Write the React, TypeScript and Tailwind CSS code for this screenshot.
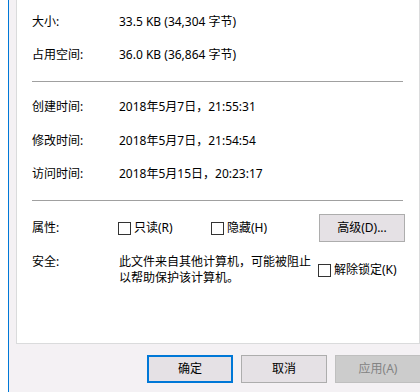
import React from "react";

const font = { fontFamily: '"Noto Sans", "Noto Sans CJK SC", sans-serif' };

function Row({ label, value, className = "" }: { label: string; value: string; className?: string }) {
  return (
    <div className={"flex h-[16px] items-center " + className}>
      <div className="w-[87px] shrink-0">{label}</div>
      <div>{value}</div>
    </div>
  );
}

function Check({ label }: { label: string }) {
  return (
    <div className="flex items-center">
      <span className="block h-[13px] w-[13px] border border-[#333333] bg-white" />
      <span className="ml-[3px]">{label}</span>
    </div>
  );
}

export default function App() {
  return (
    <div
      className="flex h-[392px] w-[420px] overflow-hidden bg-white text-[12px] leading-[16px] text-black"
      style={font}
    >
      <div className="w-[8px] shrink-0 bg-white" />
      <div className="w-[1px] shrink-0 bg-[#0078d7]" />
      <div className="flex min-w-0 flex-1 flex-col bg-[#f4f1f4] pl-[7px]">
        <div className="h-[344px] shrink-0 border-b border-l border-r border-[#dadbdc] bg-white pl-[15px] pr-[16px]">
          <Row label="大小:" value="33.5 KB (34,304 字节)" className="mt-[14px]" />
          <Row label="占用空间:" value="36.0 KB (36,864 字节)" className="mt-[17px]" />
          <div className="mt-[18px] h-[1px] bg-[#a0a0a0]" />
          <Row label="创建时间:" value="2018年5月7日，21:55:31" className="mt-[17px]" />
          <Row label="修改时间:" value="2018年5月7日，21:54:54" className="mt-[18px]" />
          <Row label="访问时间:" value="2018年5月15日，20:23:17" className="mt-[17px]" />
          <div className="mt-[18px] h-[1px] bg-[#a0a0a0]" />
          <div className="mt-[13px] flex h-[28px] items-center">
            <div className="w-[86px] shrink-0">属性:</div>
            <div className="w-[93px] shrink-0">
              <Check label="只读(R)" />
            </div>
            <div className="w-[108px] shrink-0">
              <Check label="隐藏(H)" />
            </div>
            <div className="flex h-[28px] w-[86px] shrink-0 items-center justify-center border border-[#adadad] bg-[#e5e1e5]">
              高级(D)...
            </div>
          </div>
          <div className="mt-[12px] flex items-start">
            <div className="w-[87px] shrink-0">安全:</div>
            <div className="w-[199px] shrink-0">
              此文件来自其他计算机，可能被阻止
              <br />
              以帮助保护该计算机。
            </div>
            <div className="mt-[8px]">
              <Check label="解除锁定(K)" />
            </div>
          </div>
        </div>
        <div className="mt-[11px] flex gap-[8px] pl-[131px]">
          <div className="flex h-[28px] w-[86px] shrink-0 items-center justify-center border-2 border-[#0078d7] bg-[#e5e1e5]">
            确定
          </div>
          <div className="flex h-[28px] w-[86px] shrink-0 items-center justify-center border border-[#adadad] bg-[#e5e1e5]">
            取消
          </div>
          <div className="flex h-[28px] w-[86px] shrink-0 items-center justify-center border border-[#bfbfbf] bg-[#cccccc] text-[#838383]">
            应用(A)
          </div>
        </div>
      </div>
    </div>
  );
}
